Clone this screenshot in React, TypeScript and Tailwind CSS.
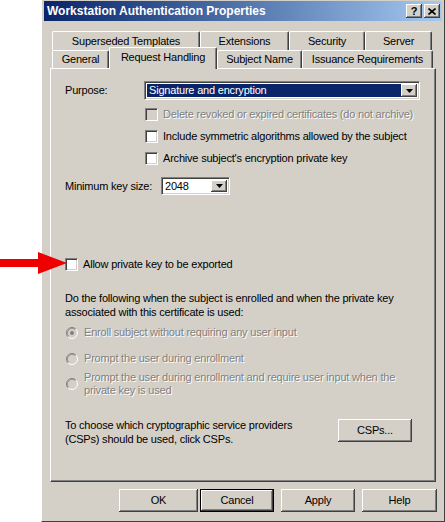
import React from "react";

const raised =
  "bg-[#d4d0c8] shadow-[inset_-1px_-1px_#404040,inset_1px_1px_#ffffff,inset_-2px_-2px_#808080]";
const sunken =
  "border border-t-[#808080] border-l-[#808080] border-b-white border-r-white shadow-[inset_1px_1px_#404040,inset_-1px_-1px_#d4d0c8]";
const dim = "text-[#808080] [text-shadow:1px_1px_0_#ffffff]";

function DropArrow() {
  return (
    <div className={`flex h-full w-[16px] items-center justify-center ${raised}`}>
      <svg width="7" height="4" viewBox="0 0 7 4">
        <path d="M0 0h7L3.5 4z" fill="#000" />
      </svg>
    </div>
  );
}

function Check({ disabled }: { disabled?: boolean }) {
  return (
    <div
      className={`h-[13px] w-[13px] shrink-0 ${sunken} ${disabled ? "bg-[#d4d0c8]" : "bg-white"}`}
    />
  );
}

function Radio({ on }: { on?: boolean }) {
  return (
    <svg width="12" height="12" viewBox="0 0 12 12" className="shrink-0">
      <circle cx="6" cy="6" r="5" fill="#d4d0c8" />
      <path d="M2.11 9.89A5.5 5.5 0 0 1 9.89 2.11" fill="none" stroke="#808080" />
      <path d="M9.89 2.11A5.5 5.5 0 0 1 2.11 9.89" fill="none" stroke="#ffffff" />
      <path d="M2.82 9.18A4.5 4.5 0 0 1 9.18 2.82" fill="none" stroke="#404040" strokeOpacity="0.35" />
      {on && <circle cx="6" cy="6" r="2" fill="#808080" />}
    </svg>
  );
}

function Tab({ label, w, selected }: { label: string; w: string; selected?: boolean }) {
  return (
    <div
      className={`${w} flex items-center justify-center rounded-t-[2px] border-l border-t border-r border-l-white border-t-white border-r-[#404040] bg-[#d4d0c8] shadow-[inset_-1px_0_#808080] ${
        selected ? "relative z-10 -mt-[3px] h-[22px] pb-[3px]" : "h-full"
      }`}
    >
      {label}
    </div>
  );
}

function Btn({ label, w, def }: { label: string; w: string; def?: boolean }) {
  return (
    <div className={`${w} h-[23px] ${def ? "border border-black" : ""}`}>
      <div className={`flex h-full w-full items-center justify-center ${raised}`}>{label}</div>
    </div>
  );
}

export default function App() {
  return (
    <div className="relative h-[522px] w-[445px] overflow-hidden whitespace-nowrap bg-white font-['Liberation_Sans',Arial,sans-serif] text-[11px] leading-[13px] tracking-[-0.2px] text-black">
      <div className="ml-[41px] flex h-[522px] w-[404px] flex-col border-l border-r border-b border-l-white border-r-[#404040] border-b-[#404040] bg-[#d4d0c8] px-[2px] pt-[1px]">
        {/* title bar */}
        <div className="flex h-[20px] items-center bg-gradient-to-r from-[#0a246a] to-[#a6caf0] pl-[3px] pr-[2px]">
          <span className="flex-1 text-[12px] font-bold tracking-normal text-white">Workstation Authentication Properties</span>
          <div className={`flex h-[14px] w-[16px] items-center justify-center text-[11px] font-bold ${raised}`}>?</div>
          <div className={`ml-[2px] flex h-[14px] w-[16px] items-center justify-center ${raised}`}>
            <svg width="8" height="7" viewBox="0 0 8 7">
              <path d="M0.5 0.5l7 6M7.5 0.5l-7 6" stroke="#000" strokeWidth="1.6" />
            </svg>
          </div>
        </div>

        {/* tabs */}
        <div className="mt-[10px] px-[6px]">
          <div className="ml-[2px] flex h-[19px]">
            <Tab label="Superseded Templates" w="w-[148px]" />
            <Tab label="Extensions" w="w-[89px]" />
            <Tab label="Security" w="w-[76px]" />
            <Tab label="Server" w="w-[67px]" />
          </div>
          <div className="ml-[2px] flex h-[18px]">
            <Tab label="General" w="w-[57px]" />
            <Tab label="Request Handling" w="w-[108px]" selected />
            <Tab label="Subject Name" w="w-[85px]" />
            <Tab label="Issuance Requirements" w="w-[131px]" />
          </div>

          {/* panel */}
          <div className="flex h-[414px] flex-col border border-t-white border-l-white border-r-[#404040] border-b-[#404040] pl-[14px] pr-[15px] shadow-[inset_-1px_-1px_#808080]">
            <div className="mt-[12px] flex h-[19px] items-center">
              <span className="w-[79px]">Purpose:</span>
              <div className={`flex h-[19px] flex-1 bg-white p-[2px] ${sunken}`}>
                <div className="flex flex-1 items-center bg-[#0a246a] pl-[2px] text-white">Signature and encryption</div>
                <DropArrow />
              </div>
            </div>

            <div className="ml-[80px] mt-[8px] flex h-[13px] items-center gap-[5px]">
              <Check disabled />
              <span className={dim}>Delete revoked or expired certificates (do not archive)</span>
            </div>
            <div className="ml-[80px] mt-[9px] flex h-[13px] items-center gap-[5px]">
              <Check />
              <span>Include symmetric algorithms allowed by the subject</span>
            </div>
            <div className="ml-[80px] mt-[9px] flex h-[13px] items-center gap-[5px]">
              <Check />
              <span>Archive subject's encryption private key</span>
            </div>

            <div className="mt-[12px] flex h-[18px] items-center">
              <span className="w-[96px]">Minimum key size:</span>
              <div className={`flex h-[18px] w-[69px] bg-white p-[2px] ${sunken}`}>
                <div className="flex flex-1 items-center pl-[1px]">2048</div>
                <DropArrow />
              </div>
            </div>

            <div className="mt-[63px] flex h-[13px] items-center gap-[5px]">
              <Check />
              <span>Allow private key to be exported</span>
            </div>

            <p className="mt-[20px] leading-[14px]">
              Do the following when the subject is enrolled and when the private key
              <br />
              associated with this certificate is used:
            </p>

            <div className={`mt-[7px] flex h-[13px] items-center gap-[6px] pl-[1px] ${dim}`}>
              <Radio on />
              <span>Enroll subject without requiring any user input</span>
            </div>
            <div className={`mt-[13px] flex h-[13px] items-center gap-[6px] pl-[1px] ${dim}`}>
              <Radio />
              <span>Prompt the user during enrollment</span>
            </div>
            <div className={`mt-[6px] flex items-center gap-[6px] pl-[1px] ${dim}`}>
              <Radio />
              <span className="leading-[13px]">
                Prompt the user during enrollment and require user input when the
                <br />
                private key is used
              </span>
            </div>

            <div className="mt-[21px] flex items-start">
              <p className="flex-1 leading-[14px]">
                To choose which cryptographic service providers
                <br />
                (CSPs) should be used, click CSPs.
              </p>
              <div className="mr-[8px] mt-[1px]">
                <Btn label="CSPs..." w="w-[74px]" />
              </div>
            </div>
          </div>
        </div>

        {/* dialog buttons */}
        <div className="mt-[7px] flex pl-[75px]">
          <Btn label="OK" w="w-[79px]" />
          <div className="ml-[2px]">
            <Btn label="Cancel" w="w-[74px]" def />
          </div>
          <div className="ml-[7px]">
            <Btn label="Apply" w="w-[74px]" />
          </div>
          <div className="ml-[7px]">
            <Btn label="Help" w="w-[75px]" />
          </div>
        </div>
      </div>

      {/* red arrow pointing at the export checkbox */}
      <svg className="absolute left-0 top-[252px]" width="68" height="22" viewBox="0 0 68 22">
        <path d="M0 7H38V0L67 11L38 22V15H0Z" fill="#ee0000" />
      </svg>
    </div>
  );
}
